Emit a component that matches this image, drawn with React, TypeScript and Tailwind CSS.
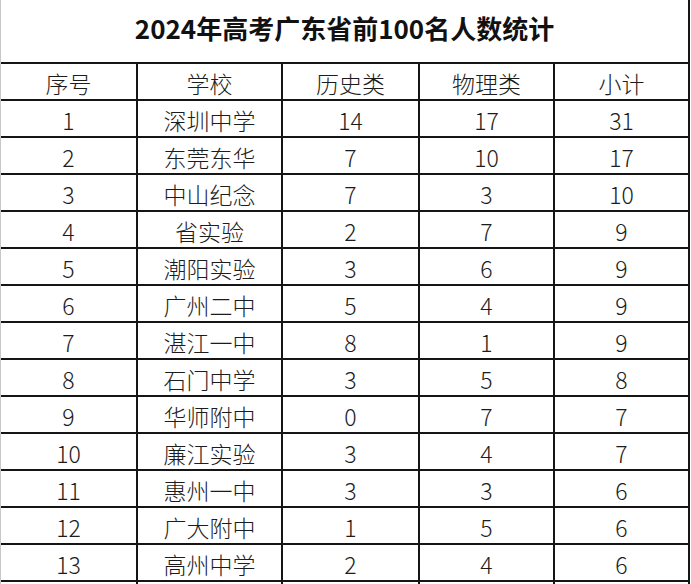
const rows: [number, string, number, number, number][] = [
  [1, '深圳中学', 14, 17, 31],
  [2, '东莞东华', 7, 10, 17],
  [3, '中山纪念', 7, 3, 10],
  [4, '省实验', 2, 7, 9],
  [5, '潮阳实验', 3, 6, 9],
  [6, '广州二中', 5, 4, 9],
  [7, '湛江一中', 8, 1, 9],
  [8, '石门中学', 3, 5, 8],
  [9, '华师附中', 0, 7, 7],
  [10, '廉江实验', 3, 4, 7],
  [11, '惠州一中', 3, 3, 6],
  [12, '广大附中', 1, 5, 6],
  [13, '高州中学', 2, 4, 6],
  [14, '', 0, 0, 0],
]

const cols = 'grid grid-cols-[135px_145px_137px_135px_135px]'
const cell = 'flex items-center justify-center pt-[2px]'
const line = 'border-l-2 border-[#151515]'

function Row({ cells, last }: { cells: (string | number)[]; last?: boolean }) {
  return (
    <div className={`${cols} h-[37px] border-t-2 border-[#151515]`}>
      {cells.map((c, i) => (
        <div key={i} className={`${cell} ${i > 0 ? line : ''}`}>
          {last ? '' : c}
        </div>
      ))}
    </div>
  )
}

export default function App() {
  return (
    <div className="h-[584px] w-[691px] overflow-hidden bg-white">
      <div
        className="w-[690px] border-l border-r-2 border-l-[#c8c8c8] border-r-[#151515] text-[23px] font-light text-[#1c1c1c]"
        style={{ fontFamily: '"Noto Sans CJK SC", "Noto Sans", sans-serif' }}
      >
        <div className="flex h-[62px] items-center justify-center pb-[8px] text-[26px] font-bold text-[#111]">
          2024年高考广东省前100名人数统计
        </div>
        <Row cells={['序号', '学校', '历史类', '物理类', '小计']} />
        {rows.map((r, i) => (
          <Row key={i} cells={r} last={i === rows.length - 1} />
        ))}
      </div>
    </div>
  )
}
